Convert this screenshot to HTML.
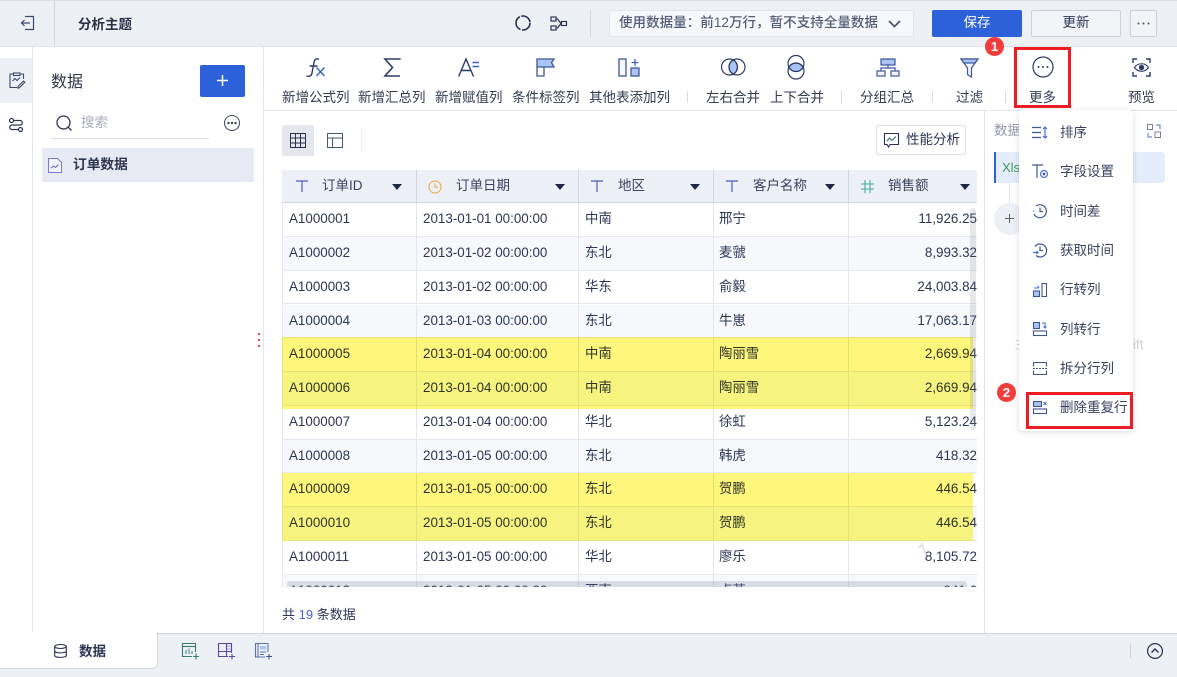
<!DOCTYPE html>
<html lang="zh"><head><meta charset="utf-8"><title>分析主题</title>
<style>
*{box-sizing:border-box;margin:0;padding:0}
html,body{width:1177px;height:677px;overflow:hidden;background:#fff}
body{font-family:"Liberation Sans","Noto Sans CJK SC",sans-serif;font-size:13.5px;color:#2c3556;position:relative}
.a{position:absolute}
.t{position:absolute;white-space:nowrap;line-height:18px}
svg{position:absolute;overflow:visible;fill:none}
.lab{position:absolute;top:90px;font-size:13.5px;line-height:16px;white-space:nowrap;color:#333a52;text-align:center}
.row{position:absolute;left:282px;width:695px;height:33.8px;border-bottom:1px solid #e6e9f2;border-left:1px solid #e6e9f2;background:#fff}
.row.e{background:#f6f8fc}
.row i{position:absolute;top:0;bottom:0;width:1px;background:#e3e6ef}
.row span{position:absolute;top:7px;line-height:18px;font-style:normal;white-space:nowrap;color:#2c3556;font-size:13.4px}
.c1{left:6px}.c2{left:140px}.c3{left:302px}.c4{left:436px}.c5{right:0}
.hd{position:absolute;top:186px;transform:translateY(-8px);line-height:18px;color:#3a4160;white-space:nowrap}
.tri{position:absolute;top:184px;width:0;height:0;border-left:5px solid transparent;border-right:5px solid transparent;border-top:6px solid #1f2745}
.m{position:absolute;left:1060px;font-size:13.5px;line-height:18px;color:#3a4160;white-space:nowrap}
.sep{position:absolute;width:1px;background:#d8dbe3}
.y{position:absolute;left:282px;width:691px;background:#fff67c;mix-blend-mode:multiply}
.y2{background:#fffb80}
</style></head><body>

<!-- top bar -->
<div class="a" style="left:0;top:0;width:1177px;height:47px;background:#edf0f5;border-top:1px solid #dfe1e5;border-bottom:1px solid #dfe2ea"></div>
<div class="a" style="left:54px;top:1px;width:1px;height:45px;background:#d5d8e0"></div>
<svg style="left:20px;top:15px" width="15" height="16" stroke="#3c4a6b" stroke-width="1.2"><path d="M5 1.500H13.500V14.500H5M10 8H1.500M4.500 5L1.500 8L4.500 11"/></svg>
<div class="t" style="left:78px;top:16px;font-size:13.5px;font-weight:bold;color:#2a3147">分析主题</div>
<svg style="left:515px;top:15px" width="16" height="16" stroke="#26304f" stroke-width="1.600"><circle cx="8" cy="8" r="7" stroke-dasharray="12 1.500 16 1.500 12 1.500"/></svg>
<svg style="left:550px;top:16px" width="17" height="15" stroke="#2c3556" stroke-width="1.2"><rect x="1" y="1" width="5" height="4"/><rect x="1" y="10" width="5" height="4"/><rect x="11.500" y="5.500" width="5" height="4"/><path d="M6 3H7.500L11 7.500L7.500 12H6"/></svg>
<div class="a" style="left:590px;top:10px;width:1px;height:27px;background:#d5d8e0"></div>
<div class="a" style="left:609px;top:10px;width:305px;height:27px;background:#f7f8fc;border:1px solid #e2e5ec;border-radius:2px"></div>
<div class="t" style="left:619px;top:14px;font-size:13.500px;color:#535c76;font-weight:500;letter-spacing:.05px">使用数据量：前12万行，暂不支持全量数据</div>
<svg style="left:888px;top:20px" width="13" height="8" stroke="#4a5370" stroke-width="1.700"><path d="M1 1L6.500 6.500L12 1"/></svg>
<div class="a" style="left:932px;top:10px;width:90px;height:27px;background:#2d61d9;border-radius:2px;color:#fff;text-align:center;line-height:26px;font-size:13.5px">保存</div>
<div class="a" style="left:1031px;top:10px;width:90px;height:27px;background:#f2f4f8;border:1px solid #cdd1da;border-radius:2px;text-align:center;line-height:24px;font-size:13.5px;color:#2c3556">更新</div>
<div class="a" style="left:1130px;top:10px;width:27px;height:27px;background:#f2f4f8;border:1px solid #cdd1da;border-radius:2px"></div>
<svg style="left:1137px;top:22px" width="14" height="3"><circle cx="1.500" cy="1.500" r="1" fill="#4a5370"/><circle cx="6.500" cy="1.500" r="1" fill="#4a5370"/><circle cx="11.500" cy="1.500" r="1" fill="#4a5370"/></svg>

<!-- left rail -->
<div class="a" style="left:32px;top:47px;width:1px;height:586px;background:#e3e5ec"></div>
<div class="a" style="left:0;top:58px;width:32px;height:45px;background:#edf0f5"></div>
<svg style="left:9px;top:72px" width="16" height="17" stroke="#3d4a68" stroke-width="1.100"><path d="M5 2H1V15.500H8M11 2H14.500V7"/><rect x="4.500" y="1" width="6.500" height="2.500"/><path d="M3.500 9L6 6.500L8 8.500L11 5.500"/><path d="M9 14.500L14.500 9L15.800 10.300L10.300 15.800L8.700 16Z"/></svg>
<svg style="left:8px;top:117px" width="16" height="16" stroke="#2c3556" stroke-width="1.200"><circle cx="3.500" cy="3.500" r="2"/><circle cx="12.500" cy="12.500" r="2"/><path d="M5.500 3.500H12C15 3.500 15 8 12 8H4C1 8 1 12.500 4 12.500H10.500"/></svg>

<!-- data panel -->
<div class="a" style="left:263px;top:47px;width:1px;height:586px;background:#e3e5ec"></div>
<div class="t" style="left:51px;top:73px;font-size:16px;line-height:20px;color:#2f3549">数据</div>
<div class="a" style="left:200px;top:65px;width:45px;height:32px;background:#2d61d9;border-radius:2px"></div>
<svg style="left:216px;top:74px" width="13" height="13" stroke="#fff" stroke-width="1.500"><path d="M6.500 1V12M1 6.500H12"/></svg>
<svg style="left:56px;top:115px" width="17" height="17" stroke="#2c3556" stroke-width="1.300"><circle cx="7.500" cy="7.500" r="6.500"/><path d="M12 12L15.500 15.500"/></svg>
<div class="t" style="left:81px;top:114px;color:#a8acb8">搜索</div>
<div class="a" style="left:51px;top:138px;width:158px;height:1px;background:#dcdfe6"></div>
<svg style="left:224px;top:115px" width="17" height="17" stroke="#3a4560" stroke-width="1"><circle cx="8" cy="8" r="7.500"/><circle cx="4.500" cy="8" r=".7" fill="#3a4560"/><circle cx="8" cy="8" r=".7" fill="#3a4560"/><circle cx="11.500" cy="8" r=".7" fill="#3a4560"/></svg>
<div class="a" style="left:42px;top:148px;width:212px;height:34px;background:#e7eaf2"></div>
<svg style="left:48px;top:158px" width="14" height="15" stroke="#7b78d8" stroke-width="1"><path d="M.5.500H9.500L13.500 4.500V14.500H.5Z" fill="#f3f3fc"/><path d="M3 10L5.500 8L7.500 9.500L10.500 6.500" stroke="#5a67c0"/></svg>
<div class="t" style="left:73px;top:156px;font-weight:bold;color:#2f3752;font-size:13.7px">订单数据</div>
<div class="a" style="left:258px;top:333px;width:2px;height:2px;background:#e5484d"></div>
<div class="a" style="left:258px;top:339px;width:2px;height:2px;background:#e5484d"></div>
<div class="a" style="left:258px;top:345px;width:2px;height:2px;background:#e5484d"></div>

<!-- toolbar -->
<div class="a" style="left:264px;top:110px;width:913px;height:1px;background:#e3e5ec"></div>
<svg style="left:305px;top:58px" width="21" height="19" stroke="#2d3a66" stroke-width="1.400"><path d="M14 1.200C11 0 9.500 1.500 9 4.500L7 15C6.500 18 4.500 18.800 1.500 18M4.500 8H12.500"/><path d="M11.500 9.500L19.500 18M19.500 9.500L11.500 18" stroke="#3a62c4"/></svg>
<svg style="left:384px;top:58px" width="17" height="19" stroke="#2d3a66" stroke-width="1.600"><path d="M16 1.500V1H1L8.500 9.500L1 18H16"/></svg>
<svg style="left:458px;top:58px" width="22" height="19" stroke="#2d3a66" stroke-width="1.400"><path d="M.7 18.500L8 1L15.500 18.500M3.500 12.500H13"/><path d="M14.500 4.500H21M14.500 8.500H21" stroke="#3a62c4"/></svg>
<svg style="left:536px;top:58px" width="19" height="19" stroke="#3f5795" stroke-width="1.300"><path d="M1 1H18L15.500 4.500L18 9H1Z" fill="#a9c4f5"/><path d="M1 9V18H8V9"/></svg>
<svg style="left:618px;top:58px" width="22" height="19" stroke="#3f5795" stroke-width="1.300"><rect x="1" y="1" width="7" height="17" fill="#f6f8fe"/><rect x="13" y="10" width="8" height="8" fill="#a9c4f5"/><path d="M17 1V8M13.500 4.500H20.500" stroke="#3a62c4"/></svg>
<div class="lab" style="left:282px">新增公式列</div>
<div class="lab" style="left:358px">新增汇总列</div>
<div class="lab" style="left:435px">新增赋值列</div>
<div class="lab" style="left:512px">条件标签列</div>
<div class="lab" style="left:589px">其他表添加列</div>
<div class="sep" style="left:687px;top:91px;height:12px"></div>
<svg style="left:721px;top:57px" width="25" height="20" stroke="#2d3a66" stroke-width="1.200"><circle cx="8.500" cy="10" r="8"/><circle cx="16" cy="10" r="8"/><path d="M12.250 3A8 8 0 0 1 12.250 17A8 8 0 0 1 12.250 3Z" fill="#a9c4f5"/></svg>
<svg style="left:786px;top:55px" width="20" height="25" stroke="#2d3a66" stroke-width="1.200"><circle cx="10" cy="8.500" r="8"/><circle cx="10" cy="16" r="8"/><path d="M3 12.250A8 8 0 0 1 17 12.250A8 8 0 0 1 3 12.250Z" fill="#a9c4f5"/></svg>
<div class="lab" style="left:706px">左右合并</div>
<div class="lab" style="left:770px">上下合并</div>
<div class="sep" style="left:841px;top:91px;height:12px"></div>
<svg style="left:876px;top:58px" width="24" height="19" stroke="#3f5795" stroke-width="1.200"><rect x="5" y="1" width="14" height="6" fill="#a9c4f5"/><rect x="1" y="13" width="8" height="5" fill="#f2f5fd"/><rect x="15" y="13" width="8" height="5" fill="#f2f5fd"/><path d="M12 7V10M5 13V10H19V13"/></svg>
<div class="lab" style="left:860px">分组汇总</div>
<div class="sep" style="left:932px;top:91px;height:12px"></div>
<svg style="left:960px;top:58px" width="19" height="20" stroke="#3f5795" stroke-width="1.200"><path d="M1 1H18L11.500 10V19L7.500 16.500V10Z" fill="#f0f4fc"/><path d="M1 1H18L15 5H4Z" fill="#a9c4f5"/></svg>
<div class="lab" style="left:956px">过滤</div>
<div class="sep" style="left:1005px;top:91px;height:12px"></div>
<svg style="left:1032px;top:56px" width="22" height="22" stroke="#2d3a66" stroke-width="1.200"><circle cx="11" cy="11" r="10"/><circle cx="6.500" cy="11" r="1" fill="#2d3a66" stroke="none"/><circle cx="11" cy="11" r="1" fill="#2d3a66" stroke="none"/><circle cx="15.500" cy="11" r="1" fill="#2d3a66" stroke="none"/></svg>
<div class="lab" style="left:1029px">更多</div>
<svg style="left:1132px;top:58px" width="19" height="19" stroke="#2d3a66" stroke-width="1.400"><path d="M1 5V1H5M14 1H18V5M18 14V18H14M5 18H1V14"/><path d="M2.500 9.500C6 4.500 13 4.500 16.500 9.500C13 14.500 6 14.500 2.500 9.500Z" stroke-width="1.100"/><circle cx="9.500" cy="9.500" r="2" fill="#2d3a66"/></svg>
<div class="lab" style="left:1128px">预览</div>

<!-- view toggles -->
<div class="a" style="left:282px;top:125px;width:32px;height:31px;background:#e5e7ec;border-radius:2px"></div>
<svg style="left:290px;top:133px" width="16" height="15" stroke="#2a3050" stroke-width="1"><path d="M.5.500H15.500V14.500H.5ZM.5 5H15.500M.5 10H15.500M5.500.500V14.500M10.500.500V14.500"/></svg>
<svg style="left:327px;top:133px" width="16" height="15" stroke="#3c5a70" stroke-width="1"><path d="M.5.500H15.500V14.500H.5ZM.5 5H15.500M5.500 5V14.500"/></svg>
<div class="a" style="left:361px;top:129px;width:1px;height:23px;background:#eceef2"></div>
<div class="a" style="left:876px;top:125px;width:90px;height:30px;background:#fff;border:1px solid #dfe1e6;border-radius:2px"></div>
<svg style="left:884px;top:133px" width="15" height="15" stroke="#2a3050" stroke-width="1.100"><path d="M.5.500H14.500V11.500H6L4.500 14L3 11.500H.5Z"/><path d="M3 8L5.500 5L8 7.500L12 3.500" stroke="#3c6a70"/></svg>
<div class="t" style="left:906px;top:131px;color:#2c3556">性能分析</div>

<!-- table -->
<div class="a" id="tb" style="left:0;top:0;width:1177px;height:587px;overflow:hidden">
<div class="a" style="left:282px;top:170px;width:695px;height:33px;background:#edf0f6;border-bottom:1px solid #d5d9e4"></div>
<div class="a" style="left:416px;top:170px;width:1px;height:33px;background:#d2d6e1"></div>
<div class="a" style="left:578px;top:170px;width:1px;height:33px;background:#d2d6e1"></div>
<div class="a" style="left:713px;top:170px;width:1px;height:33px;background:#d2d6e1"></div>
<div class="a" style="left:848px;top:170px;width:1px;height:33px;background:#d2d6e1"></div>
<svg style="left:296px;top:180px" width="12" height="12" stroke="#4c5cba" stroke-width="1.200"><path d="M0 1H12M6 1V12"/></svg>
<div class="hd" style="left:322px;top:185px">订单ID</div><div class="tri" style="left:392px"></div>
<svg style="left:428px;top:180px" width="14" height="14" stroke="#f0ae5c" stroke-width="1.200"><circle cx="7" cy="7" r="6"/><path d="M7 3.500V7.200H10"/></svg>
<div class="hd" style="left:456px;top:185px">订单日期</div><div class="tri" style="left:555px"></div>
<svg style="left:591px;top:180px" width="12" height="12" stroke="#4c5cba" stroke-width="1.200"><path d="M0 1H12M6 1V12"/></svg>
<div class="hd" style="left:618px;top:185px">地区</div><div class="tri" style="left:690px"></div>
<svg style="left:726px;top:180px" width="12" height="12" stroke="#4c5cba" stroke-width="1.200"><path d="M0 1H12M6 1V12"/></svg>
<div class="hd" style="left:753px;top:185px">客户名称</div><div class="tri" style="left:825px"></div>
<svg style="left:861px;top:180px" width="13" height="13" stroke="#45b0a0" stroke-width="1.100"><path d="M0 4H13M0 9H13M4 0V13M9 0V13"/></svg>
<div class="hd" style="left:888px;top:185px">销售额</div><div class="tri" style="left:960px"></div>

<div class="row" style="top:203px"><i style="left:133px"></i><i style="left:295px"></i><i style="left:430px"></i><i style="left:565px"></i><span class="c1">A1000001</span><span class="c2">2013-01-01 00:00:00</span><span class="c3">中南</span><span class="c4">邢宁</span><span class="c5">11,926.25</span></div>
<div class="row e" style="top:236.800px"><i style="left:133px"></i><i style="left:295px"></i><i style="left:430px"></i><i style="left:565px"></i><span class="c1">A1000002</span><span class="c2">2013-01-02 00:00:00</span><span class="c3">东北</span><span class="c4">麦虢</span><span class="c5">8,993.32</span></div>
<div class="row" style="top:270.600px"><i style="left:133px"></i><i style="left:295px"></i><i style="left:430px"></i><i style="left:565px"></i><span class="c1">A1000003</span><span class="c2">2013-01-02 00:00:00</span><span class="c3">华东</span><span class="c4">俞毅</span><span class="c5">24,003.84</span></div>
<div class="row e" style="top:304.600px;height:33.600px"><i style="left:133px"></i><i style="left:295px"></i><i style="left:430px"></i><i style="left:565px"></i><span class="c1">A1000004</span><span class="c2">2013-01-03 00:00:00</span><span class="c3">东北</span><span class="c4">牛崽</span><span class="c5">17,063.17</span></div>
<div class="row" style="top:338.200px"><i style="left:133px"></i><i style="left:295px"></i><i style="left:430px"></i><i style="left:565px"></i><span class="c1">A1000005</span><span class="c2">2013-01-04 00:00:00</span><span class="c3">中南</span><span class="c4">陶丽雪</span><span class="c5">2,669.94</span></div>
<div class="row e" style="top:372px"><i style="left:133px"></i><i style="left:295px"></i><i style="left:430px"></i><i style="left:565px"></i><span class="c1">A1000006</span><span class="c2">2013-01-04 00:00:00</span><span class="c3">中南</span><span class="c4">陶丽雪</span><span class="c5">2,669.94</span></div>
<div class="row" style="top:405.800px"><i style="left:133px"></i><i style="left:295px"></i><i style="left:430px"></i><i style="left:565px"></i><span class="c1">A1000007</span><span class="c2">2013-01-04 00:00:00</span><span class="c3">华北</span><span class="c4">徐虹</span><span class="c5">5,123.24</span></div>
<div class="row e" style="top:439.600px"><i style="left:133px"></i><i style="left:295px"></i><i style="left:430px"></i><i style="left:565px"></i><span class="c1">A1000008</span><span class="c2">2013-01-05 00:00:00</span><span class="c3">东北</span><span class="c4">韩虎</span><span class="c5">418.32</span></div>
<div class="row" style="top:473.400px"><i style="left:133px"></i><i style="left:295px"></i><i style="left:430px"></i><i style="left:565px"></i><span class="c1">A1000009</span><span class="c2">2013-01-05 00:00:00</span><span class="c3">东北</span><span class="c4">贺鹏</span><span class="c5">446.54</span></div>
<div class="row e" style="top:507.200px"><i style="left:133px"></i><i style="left:295px"></i><i style="left:430px"></i><i style="left:565px"></i><span class="c1">A1000010</span><span class="c2">2013-01-05 00:00:00</span><span class="c3">东北</span><span class="c4">贺鹏</span><span class="c5">446.54</span></div>
<div class="row" style="top:541px"><i style="left:133px"></i><i style="left:295px"></i><i style="left:430px"></i><i style="left:565px"></i><span class="c1">A1000011</span><span class="c2">2013-01-05 00:00:00</span><span class="c3">华北</span><span class="c4">廖乐</span><span class="c5">8,105.72</span></div>
<div class="row e" style="top:574.800px"><i style="left:133px"></i><i style="left:295px"></i><i style="left:430px"></i><i style="left:565px"></i><span class="c1">A1000012</span><span class="c2">2013-01-05 00:00:00</span><span class="c3">西南</span><span class="c4">卢苇</span><span class="c5">941.6</span></div>

<div class="a" style="left:970px;top:208px;width:6px;height:222px;background:rgba(120,125,140,.18);border-radius:3px"></div>
<div class="a" style="left:287px;top:581px;width:680px;height:6px;background:rgba(120,125,140,.22);border-radius:3px 3px 0 0"></div>
<svg style="left:918px;top:543px" width="10" height="17" stroke="#e2e4ea" stroke-width="2"><path d="M1 5L4 1L8 12"/></svg>
<div class="y" style="top:337px;height:35px"></div>
<div class="y y2" style="top:372px;height:34px"></div>
<div class="y" style="top:406px;height:3px"></div>
<div class="y" style="top:473px;height:34px"></div>
<div class="y y2" style="top:507px;height:34px"></div>
</div>

<div class="t" style="left:282px;top:606px;color:#2c3556;font-size:13px">共 <span style="color:#4f62d8">19</span> 条数据</div>

<!-- right panel -->
<div class="a" style="left:984px;top:111px;width:1px;height:522px;background:#e0e2e8"></div>
<div class="t" style="left:994px;top:122px;color:#9398a6">数据</div>
<svg style="left:1147px;top:124px" width="14" height="14" stroke="#7b8190" stroke-width="1"><rect x=".5" y=".5" width="5" height="5"/><rect x="8" y="8" width="5.500" height="5.500"/><path d="M9 1H13V5M1 9V13H5" stroke="#5a75b8"/></svg>
<div class="a" style="left:994px;top:152px;width:171px;height:31px;background:#e4edfc;border-left:2px solid #2d61d9;border-radius:0 4px 4px 0"></div>
<div class="t" style="left:1002px;top:159px;font-size:13px;color:#3f9a5e">Xls</div>
<div class="a" style="left:1009px;top:183px;width:1px;height:20px;background:#dfe2e8"></div>
<div class="a" style="left:994px;top:203px;width:31px;height:32px;border-radius:50%;background:#edf0f5"></div>
<svg style="left:1004px;top:213px" width="11" height="11" stroke="#5a6170" stroke-width="1"><path d="M5.500 1V10M1 5.500H10"/></svg>
<div class="t" style="left:1015px;top:336px;color:#d0d3da">主</div>
<div class="t" style="left:1133px;top:336px;color:#d0d3da">ift</div>

<!-- dropdown menu -->
<div class="a" style="left:1019px;top:110px;width:114px;height:321px;background:#fff;border-radius:4px;box-shadow:0 1px 6px rgba(40,50,80,.18)"></div>
<svg style="left:1032px;top:126px" width="16" height="13" stroke="#3f5795" stroke-width="1.200"><path d="M0 1.500H9M0 6.500H9M0 11.500H9"/><path d="M13 1V12M11 3L13 1L15 3M11 10L13 12L15 10" stroke="#4a70d0"/></svg>
<div class="m" style="top:124px">排序</div>
<svg style="left:1032px;top:164px" width="16" height="15" stroke="#3f5795" stroke-width="1.200"><path d="M0 1H11M5 1V14"/><circle cx="12" cy="10" r="3.500" stroke="#4a70d0"/><circle cx="12" cy="10" r=".8" fill="#4a70d0"/></svg>
<div class="m" style="top:163px">字段设置</div>
<svg style="left:1033px;top:204px" width="14" height="14" stroke="#3f5795" stroke-width="1.200"><path d="M3 2A6.500 6.500 0 1 1 1 10"/><path d="M7 3.500V7.500H10"/><path d="M.6 7.500V5.500" stroke-dasharray="1 1"/></svg>
<div class="m" style="top:203px">时间差</div>
<svg style="left:1033px;top:243px" width="14" height="14" stroke="#3f5795" stroke-width="1.200"><path d="M2 3.500A6.500 6.500 0 1 1 3 12.500"/><path d="M7 3.500V7.500H10"/><path d="M0 9.500H5M3.500 8L5 9.500L3.500 11" stroke="#4a70d0"/></svg>
<div class="m" style="top:242px">获取时间</div>
<svg style="left:1033px;top:283px" width="14" height="14" stroke="#3f5795" stroke-width="1.100"><rect x="9" y=".5" width="4.500" height="13"/><rect x=".5" y="8" width="6" height="5.500" fill="#a9c4f5"/><path d="M1 5H6M4.500 3L6 5" stroke="#4a70d0"/></svg>
<div class="m" style="top:281px">行转列</div>
<svg style="left:1033px;top:322px" width="14" height="14" stroke="#3f5795" stroke-width="1.100"><rect x=".5" y="9" width="13" height="4.500"/><rect x=".5" y=".5" width="6" height="6" fill="#a9c4f5"/><path d="M9 1H12V6M10.500 4.500L12 6L13.500 4.500" stroke="#4a70d0"/></svg>
<div class="m" style="top:321px">列转行</div>
<svg style="left:1033px;top:362px" width="14" height="13" stroke="#3f5795" stroke-width="1.100"><path d="M.5 4.500V.5H13.500V4.500M.5 8.500V12.500H13.500V8.500"/><path d="M0 6.500H14" stroke-dasharray="2 1"/></svg>
<div class="m" style="top:360px">拆分行列</div>
<svg style="left:1033px;top:401px" width="14" height="13" stroke="#3f5795" stroke-width="1.100"><rect x=".5" y="8" width="13" height="4.500"/><rect x=".5" y=".5" width="8" height="5" fill="#a9c4f5"/><path d="M10.500 1L13.500 4M13.500 1L10.500 4" stroke="#4a70d0"/></svg>
<div class="m" style="top:399px">删除重复行</div>

<!-- annotations -->
<div class="a" style="left:1014px;top:47px;width:57px;height:61px;border:3px solid #ee1c25"></div>
<div class="a" style="left:1026px;top:392px;width:107px;height:37px;border:3px solid #ee1c25"></div>
<div class="a" style="left:985px;top:37px;width:19px;height:19px;border-radius:50%;background:#f23d3d;color:#fff;text-align:center;font-size:13px;font-weight:bold;line-height:19px">1</div>
<div class="a" style="left:997px;top:383px;width:19px;height:19px;border-radius:50%;background:#f23d3d;color:#fff;text-align:center;font-size:13px;font-weight:bold;line-height:19px">2</div>

<!-- bottom bar -->
<div class="a" style="left:0;top:633px;width:1177px;height:44px;background:#edf0f5;border-top:1px solid #cfd2da"></div>
<div class="a" style="left:0;top:632px;width:158px;height:37px;background:#fff;border-right:1px solid #d5d8e0;border-bottom:1px solid #d5d8e0;border-radius:0 0 6px 0"></div>
<svg style="left:54px;top:644px" width="13" height="14" stroke="#26304f" stroke-width="1.100"><ellipse cx="6.500" cy="2.500" rx="5.800" ry="2"/><path d="M.7 2.500V11.500C.7 14 12.300 14 12.300 11.500V2.500M.7 7C.7 9.500 12.300 9.500 12.300 7"/></svg>
<div class="t" style="left:79px;top:643px;font-weight:bold;color:#2c3556">数据</div>
<svg style="left:182px;top:643px" width="18" height="17" stroke="#3a7a70" stroke-width="1.100"><path d="M13.500 9V.5H.5V13.500H10"/><path d="M.5 3.500H13.500"/><path d="M4 11V7M7 11V5.500M10 11V8" stroke="#7aa8a8" stroke-width="1.500"/><path d="M14 10.500V16.500M11 13.500H17"/></svg>
<svg style="left:218px;top:643px" width="18" height="17" stroke="#5548a8" stroke-width="1.100"><path d="M13.500 10V.5H.5V13.500H10M.5 8.500H13.500M8.500.5V13.500"/><path d="M9 3H13M9 6H13" stroke="#a8a0d8"/><path d="M14 11V16.500M11 13.500H17"/></svg>
<svg style="left:255px;top:643px" width="18" height="17" stroke="#5a75a8" stroke-width="1.100"><rect x=".5" y=".5" width="2.500" height="13.500"/><path d="M3 .5H13V9M3 14H10"/><rect x="5" y="3" width="6" height="3.500" fill="#a9c4f5" stroke="none"/><path d="M5 9H11M5 11.500H9"/><path d="M14 11V16.500M11 13.500H17" stroke="#3f5795"/></svg>
<div class="a" style="left:1130px;top:644px;width:1px;height:14px;background:#d0d3da"></div>
<svg style="left:1147px;top:643px" width="16" height="16" stroke="#26304f" stroke-width="1.200"><circle cx="8" cy="8" r="7.400"/><path d="M4.500 9.500L8 6L11.500 9.500" stroke-width="1.400"/></svg>
</body></html>
